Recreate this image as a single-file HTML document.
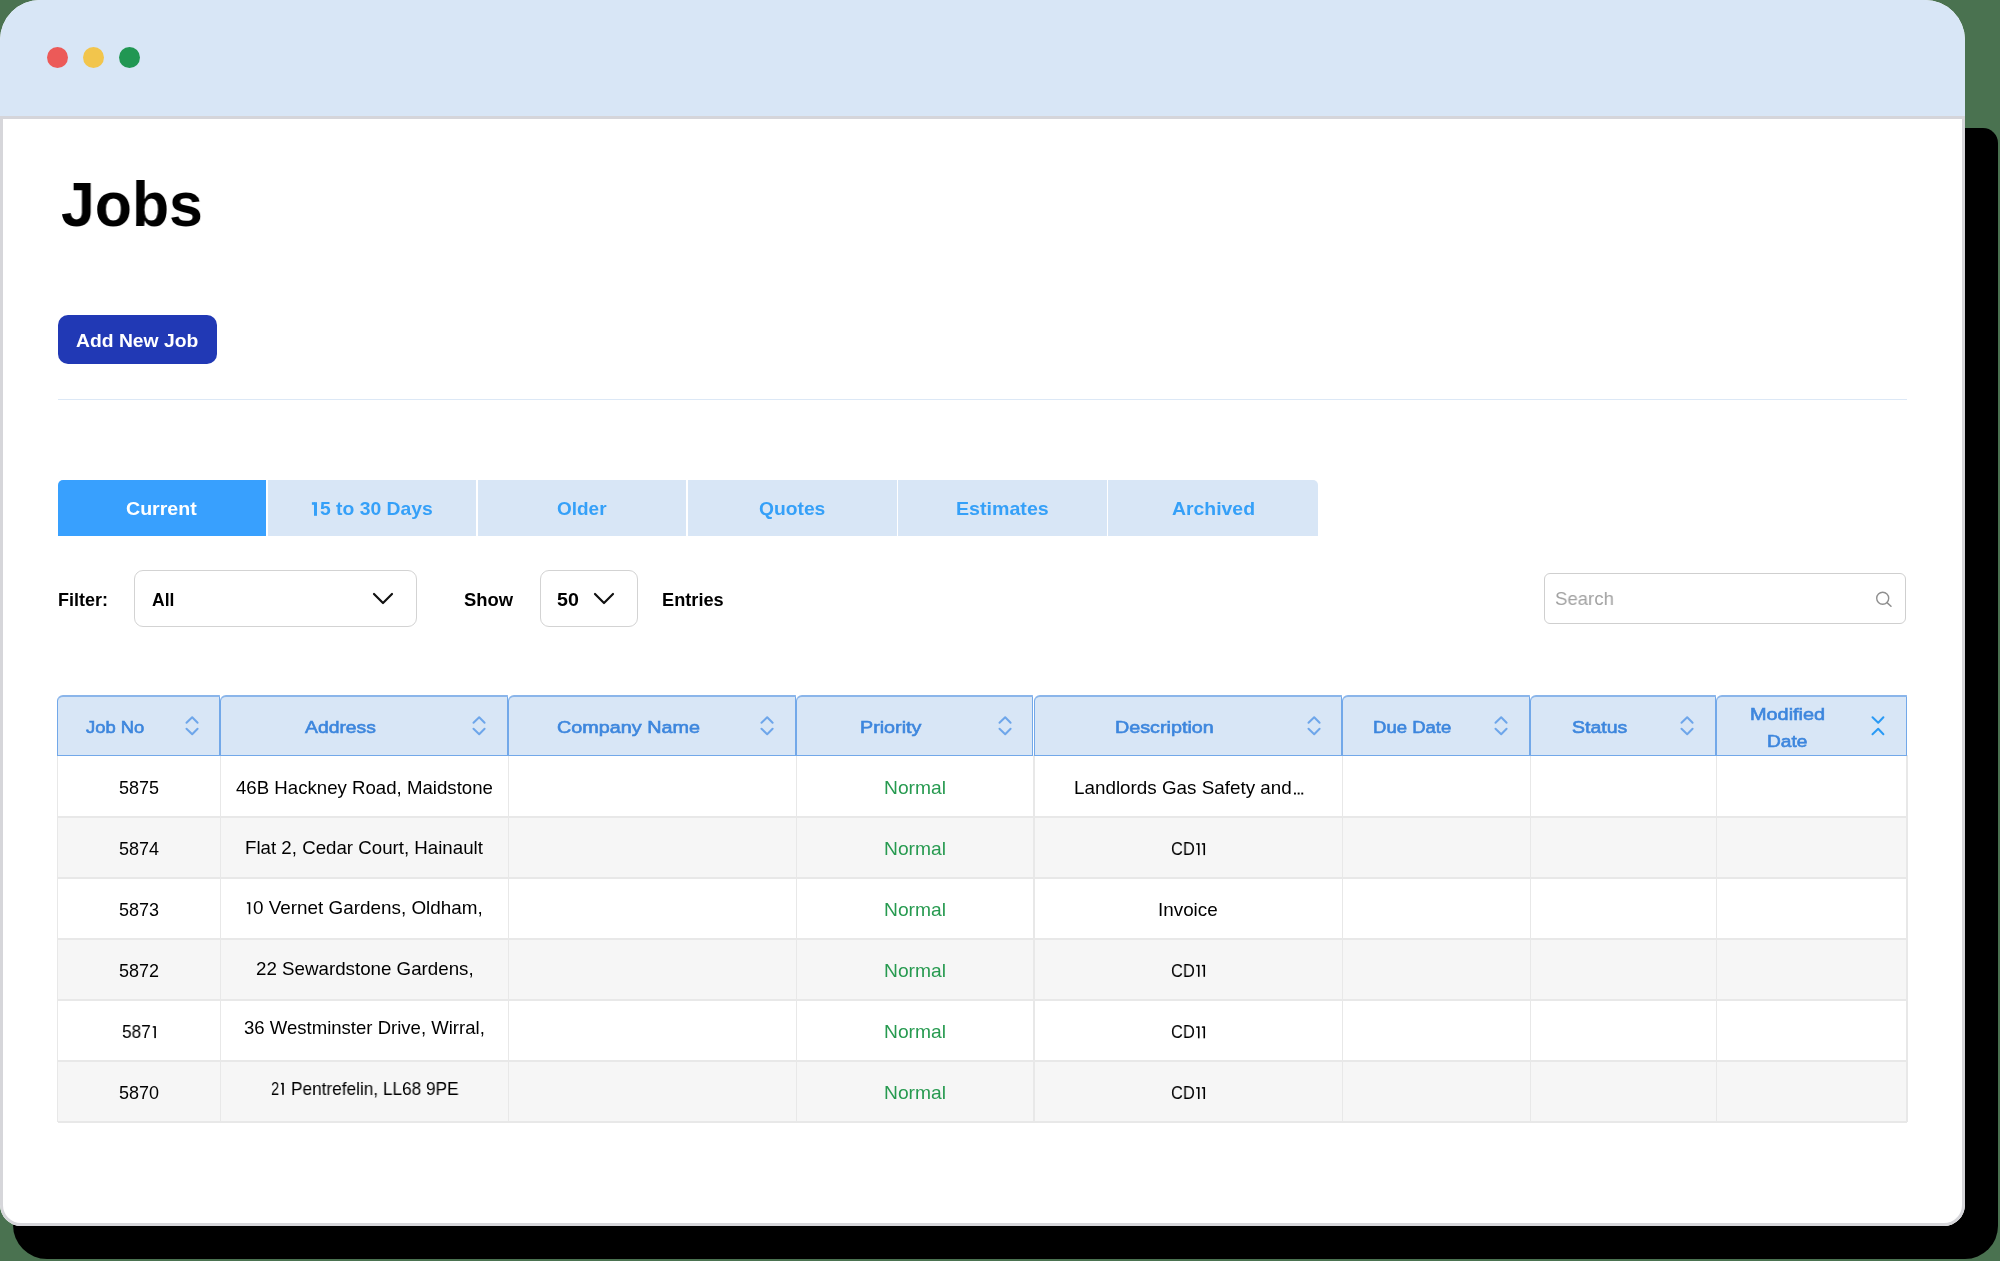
<!DOCTYPE html><html><head><meta charset="utf-8"><style>
*{margin:0;padding:0;box-sizing:border-box}
html,body{width:2000px;height:1261px;overflow:hidden}
body{background:#4a7250;position:relative;font-family:"Liberation Sans",sans-serif}
.t{position:absolute;white-space:nowrap;transform-origin:0 0;will-change:transform}
#shadow{position:absolute;left:13px;top:128px;width:1985px;height:1131px;background:#000;border-radius:0 15px 33px 34px}
#win{position:absolute;left:0;top:0;width:1965px;height:1225.8px;border-radius:40px 40px 21px 21px;overflow:hidden;background:#fff}
#tb{position:absolute;left:0;top:0;width:1965px;height:116px;background:#d8e6f6}
#tbline{position:absolute;left:0;top:116px;width:1965px;height:3px;background:#d5d5da}
#body{position:absolute;left:0;top:118px;width:1965px;height:1107.8px;border:3px solid #d6d6da;border-top:none;border-radius:0 0 21px 21px}
.dot{position:absolute;top:47.2px;width:21px;height:21px;border-radius:50%}
#btn{position:absolute;left:57.6px;top:314.9px;width:159px;height:49.5px;background:#2139b5;border-radius:10px}
#sep{position:absolute;left:57.5px;top:398.5px;width:1849px;height:1.5px;background:#dce8f6}
.tab{position:absolute;top:480.4px;height:55.2px;background:#d8e6f6}
.tab.cur{background:#38a0fe}
.sel{position:absolute;top:570.2px;height:56.8px;border:1.6px solid #d3d3d3;border-radius:9px;background:#fff}
.chev{position:absolute}
#search{position:absolute;left:1543.6px;top:573px;width:362.8px;height:51.4px;border:1.6px solid #cfcfcf;border-radius:6px;background:#fff}
.row{position:absolute;left:57.5px;width:1849.5px}
.hl{position:absolute;left:57.5px;width:1849.5px;height:2px;background:#e8e8e8}
.vl{position:absolute;top:755px;height:367px;width:1.5px;background:#e8e8e8}
.th{position:absolute;top:695px;height:60.5px;background:#d8e6f6;border:1.5px solid #72a8e9;border-top:2px solid #8ab5ea;border-radius:6px 0 0 0}
.sort{position:absolute}
</style></head><body>
<div id="shadow"></div>
<div id="win"><div id="tb"></div><div id="tbline"></div><div id="body"></div></div>
<div class="dot" style="left:47.40px;background:#ec5a58"></div>
<div class="dot" style="left:83.10px;background:#f2c54c"></div>
<div class="dot" style="left:118.70px;background:#219753"></div>
<div class="t" style="left:61.00px;top:173.09px;font-size:62.50px;line-height:62.50px;font-weight:700;color:#000;transform:scaleX(0.9726);">Jobs</div>
<div id="btn"></div>
<div class="t" style="left:75.70px;top:331.22px;font-size:19.00px;line-height:19.00px;font-weight:700;color:#fff;transform:scaleX(1.0158);">Add New Job</div>
<div id="sep"></div>
<div class="tab cur" style="left:57.50px;width:208.78px;border-top-left-radius:5px;"></div>
<div class="tab" style="left:267.58px;width:208.78px;"></div>
<div class="tab" style="left:477.67px;width:208.78px;"></div>
<div class="tab" style="left:687.75px;width:208.78px;"></div>
<div class="tab" style="left:897.83px;width:208.78px;"></div>
<div class="tab" style="left:1107.92px;width:210.08px;border-top-right-radius:5px;"></div>
<div class="t" style="left:125.89px;top:500.34px;font-size:18.50px;line-height:18.50px;font-weight:700;color:#fff;transform:scaleX(1.0588);">Current</div>
<div class="t" style="left:319.85px;top:500.34px;font-size:18.50px;line-height:18.50px;font-weight:700;color:#35a0f8;transform:scaleX(1.0449);">5 to 30 Days</div>
<svg style="position:absolute;left:0;top:0" width="400" height="530"><rect x="314" y="502.2" width="3" height="13.6" fill="#35a0f8"/><rect x="311.9" y="502.2" width="3" height="2.6" fill="#35a0f8"/></svg>
<div class="t" style="left:556.96px;top:500.34px;font-size:18.50px;line-height:18.50px;font-weight:700;color:#35a0f8;transform:scaleX(1.0245);">Older</div>
<div class="t" style="left:758.84px;top:500.34px;font-size:18.50px;line-height:18.50px;font-weight:700;color:#35a0f8;transform:scaleX(1.0406);">Quotes</div>
<div class="t" style="left:956.08px;top:500.34px;font-size:18.50px;line-height:18.50px;font-weight:700;color:#35a0f8;transform:scaleX(1.0609);">Estimates</div>
<div class="t" style="left:1171.56px;top:500.34px;font-size:18.50px;line-height:18.50px;font-weight:700;color:#35a0f8;transform:scaleX(1.0481);">Archived</div>
<div class="t" style="left:58.20px;top:592.19px;font-size:17.50px;line-height:17.50px;font-weight:700;color:#000;transform:scaleX(1.0286);">Filter:</div>
<div class="sel" style="left:134px;width:283px"></div>
<div class="t" style="left:152.00px;top:592.19px;font-size:17.50px;line-height:17.50px;font-weight:700;color:#000;">All</div>
<svg class="chev" style="left:370px;top:589px" width="26" height="20" viewBox="0 0 26 20"><path d="M4 5 L13 14 L22 5" fill="none" stroke="#111" stroke-width="2.2" stroke-linecap="round" stroke-linejoin="round"/></svg>
<div class="t" style="left:463.50px;top:592.19px;font-size:17.50px;line-height:17.50px;font-weight:700;color:#000;transform:scaleX(1.0521);">Show</div>
<div class="sel" style="left:539.6px;width:98.4px"></div>
<div class="t" style="left:557.30px;top:592.19px;font-size:17.50px;line-height:17.50px;font-weight:700;color:#000;transform:scaleX(1.1200);">50</div>
<svg class="chev" style="left:590.8px;top:589px" width="26" height="20" viewBox="0 0 26 20"><path d="M4 5 L13 14 L22 5" fill="none" stroke="#111" stroke-width="2.2" stroke-linecap="round" stroke-linejoin="round"/></svg>
<div class="t" style="left:661.60px;top:592.19px;font-size:17.50px;line-height:17.50px;font-weight:700;color:#000;transform:scaleX(1.0400);">Entries</div>
<div id="search"></div>
<div class="t" style="left:1555.40px;top:589.12px;font-size:19.00px;line-height:19.00px;color:#a2a2a2;transform:scaleX(0.9767);">Search</div>
<svg style="position:absolute;left:1872px;top:588px" width="24" height="24" viewBox="0 0 24 24"><circle cx="10.7" cy="10.2" r="6" fill="none" stroke="#8f8f8f" stroke-width="1.4"/><path d="M15 14.6 L19 18.2" stroke="#8f8f8f" stroke-width="1.5" stroke-linecap="round"/></svg>
<div class="row" style="top:755.5px;height:61.0px;background:#fff"></div>
<div class="row" style="top:816.5px;height:61.0px;background:#f6f6f6"></div>
<div class="row" style="top:877.5px;height:61.0px;background:#fff"></div>
<div class="row" style="top:938.5px;height:61.0px;background:#f6f6f6"></div>
<div class="row" style="top:999.5px;height:61.0px;background:#fff"></div>
<div class="row" style="top:1060.5px;height:61.5px;background:#f6f6f6"></div>
<div class="hl" style="top:815.5px"></div>
<div class="hl" style="top:876.5px"></div>
<div class="hl" style="top:937.5px"></div>
<div class="hl" style="top:998.5px"></div>
<div class="hl" style="top:1059.5px"></div>
<div class="hl" style="top:1121.0px"></div>
<div class="vl" style="left:56.75px"></div>
<div class="vl" style="left:219.75px"></div>
<div class="vl" style="left:507.55px"></div>
<div class="vl" style="left:795.65px"></div>
<div class="vl" style="left:1033.25px"></div>
<div class="vl" style="left:1341.75px"></div>
<div class="vl" style="left:1529.65px"></div>
<div class="vl" style="left:1715.55px"></div>
<div class="vl" style="left:1906.25px"></div>
<div class="th" style="left:57.00px;width:163.00px"></div>
<div class="th" style="left:220.00px;width:287.80px"></div>
<div class="th" style="left:507.80px;width:288.10px"></div>
<div class="th" style="left:795.90px;width:237.60px"></div>
<div class="th" style="left:1033.50px;width:308.50px"></div>
<div class="th" style="left:1342.00px;width:187.90px"></div>
<div class="th" style="left:1529.90px;width:185.90px"></div>
<div class="th" style="left:1715.80px;width:191.70px"></div>
<div class="t" style="left:85.75px;top:719.10px;font-size:17.01px;line-height:17.01px;-webkit-text-stroke:0.6px #3d86dd;color:#3d86dd;transform:scaleX(1.0833);">Job No</div>
<svg class="sort" style="left:179.50px;top:711px" width="24" height="30" viewBox="0 0 24 30"><path d="M6.5 11.8 L12.2 6.2 L17.6 11.8 M6.5 17.8 L12.2 23.2 L17.6 17.8" fill="none" stroke="#6ea6ea" stroke-width="2" stroke-linecap="round" stroke-linejoin="round"/></svg>
<div class="t" style="left:305.15px;top:719.10px;font-size:17.01px;line-height:17.01px;-webkit-text-stroke:0.6px #3d86dd;color:#3d86dd;transform:scaleX(1.1371);">Address</div>
<svg class="sort" style="left:467.30px;top:711px" width="24" height="30" viewBox="0 0 24 30"><path d="M6.5 11.8 L12.2 6.2 L17.6 11.8 M6.5 17.8 L12.2 23.2 L17.6 17.8" fill="none" stroke="#6ea6ea" stroke-width="2" stroke-linecap="round" stroke-linejoin="round"/></svg>
<div class="t" style="left:556.80px;top:719.10px;font-size:17.01px;line-height:17.01px;-webkit-text-stroke:0.6px #3d86dd;color:#3d86dd;transform:scaleX(1.1634);">Company Name</div>
<svg class="sort" style="left:755.40px;top:711px" width="24" height="30" viewBox="0 0 24 30"><path d="M6.5 11.8 L12.2 6.2 L17.6 11.8 M6.5 17.8 L12.2 23.2 L17.6 17.8" fill="none" stroke="#6ea6ea" stroke-width="2" stroke-linecap="round" stroke-linejoin="round"/></svg>
<div class="t" style="left:860.45px;top:719.10px;font-size:17.01px;line-height:17.01px;-webkit-text-stroke:0.6px #3d86dd;color:#3d86dd;transform:scaleX(1.1604);">Priority</div>
<svg class="sort" style="left:993.00px;top:711px" width="24" height="30" viewBox="0 0 24 30"><path d="M6.5 11.8 L12.2 6.2 L17.6 11.8 M6.5 17.8 L12.2 23.2 L17.6 17.8" fill="none" stroke="#6ea6ea" stroke-width="2" stroke-linecap="round" stroke-linejoin="round"/></svg>
<div class="t" style="left:1114.88px;top:719.10px;font-size:17.01px;line-height:17.01px;-webkit-text-stroke:0.6px #3d86dd;color:#3d86dd;transform:scaleX(1.1618);">Description</div>
<svg class="sort" style="left:1301.50px;top:711px" width="24" height="30" viewBox="0 0 24 30"><path d="M6.5 11.8 L12.2 6.2 L17.6 11.8 M6.5 17.8 L12.2 23.2 L17.6 17.8" fill="none" stroke="#6ea6ea" stroke-width="2" stroke-linecap="round" stroke-linejoin="round"/></svg>
<div class="t" style="left:1373.20px;top:719.10px;font-size:17.01px;line-height:17.01px;-webkit-text-stroke:0.6px #3d86dd;color:#3d86dd;transform:scaleX(1.0903);">Due Date</div>
<svg class="sort" style="left:1489.40px;top:711px" width="24" height="30" viewBox="0 0 24 30"><path d="M6.5 11.8 L12.2 6.2 L17.6 11.8 M6.5 17.8 L12.2 23.2 L17.6 17.8" fill="none" stroke="#6ea6ea" stroke-width="2" stroke-linecap="round" stroke-linejoin="round"/></svg>
<div class="t" style="left:1571.85px;top:719.10px;font-size:17.01px;line-height:17.01px;-webkit-text-stroke:0.6px #3d86dd;color:#3d86dd;transform:scaleX(1.1458);">Status</div>
<svg class="sort" style="left:1675.30px;top:711px" width="24" height="30" viewBox="0 0 24 30"><path d="M6.5 11.8 L12.2 6.2 L17.6 11.8 M6.5 17.8 L12.2 23.2 L17.6 17.8" fill="none" stroke="#6ea6ea" stroke-width="2" stroke-linecap="round" stroke-linejoin="round"/></svg>
<div class="t" style="left:1749.70px;top:705.90px;font-size:17.01px;line-height:17.01px;-webkit-text-stroke:0.6px #3d86dd;color:#3d86dd;transform:scaleX(1.1687);">Modified</div>
<div class="t" style="left:1766.90px;top:732.70px;font-size:17.01px;line-height:17.01px;-webkit-text-stroke:0.6px #3d86dd;color:#3d86dd;transform:scaleX(1.1250);">Date</div>
<svg class="sort" style="left:1866px;top:711px" width="24" height="30" viewBox="0 0 24 30"><path d="M6.5 6.2 L12.2 11.8 L17.4 6.2 M6.5 23.2 L12.2 17.8 L17.4 23.2" fill="none" stroke="#2a9af5" stroke-width="2" stroke-linecap="round" stroke-linejoin="round"/></svg>
<div class="t" style="left:119.00px;top:779.27px;font-size:17.99px;line-height:17.99px;color:#000;">5875</div>
<div class="t" style="left:235.90px;top:779.27px;font-size:17.99px;line-height:17.99px;color:#000;transform:scaleX(1.0363);">46B Hackney Road, Maidstone</div>
<div class="t" style="left:884.20px;top:779.27px;font-size:17.99px;line-height:17.99px;color:#279a50;transform:scaleX(1.0690);">Normal</div>
<div class="t" style="left:1073.75px;top:779.27px;font-size:17.99px;line-height:17.99px;color:#000;transform:scaleX(1.0469);">Landlords Gas Safety and</div>
<div class="t" style="left:119.00px;top:840.27px;font-size:17.99px;line-height:17.99px;color:#000;">5874</div>
<div class="t" style="left:245.40px;top:839.47px;font-size:17.99px;line-height:17.99px;color:#000;transform:scaleX(1.0393);">Flat 2, Cedar Court, Hainault</div>
<div class="t" style="left:884.20px;top:840.27px;font-size:17.99px;line-height:17.99px;color:#279a50;transform:scaleX(1.0690);">Normal</div>
<div class="t" style="left:1171.05px;top:840.27px;font-size:17.99px;line-height:17.99px;color:#000;transform:scaleX(0.9154);">CD</div>
<div class="t" style="left:119.00px;top:900.77px;font-size:17.99px;line-height:17.99px;color:#000;">5873</div>
<div class="t" style="left:253.00px;top:899.37px;font-size:17.99px;line-height:17.99px;color:#000;transform:scaleX(1.0493);">0 Vernet Gardens, Oldham,</div>
<div class="t" style="left:884.20px;top:900.77px;font-size:17.99px;line-height:17.99px;color:#279a50;transform:scaleX(1.0690);">Normal</div>
<div class="t" style="left:1158.40px;top:900.77px;font-size:17.99px;line-height:17.99px;color:#000;transform:scaleX(1.0474);">Invoice</div>
<div class="t" style="left:119.00px;top:961.97px;font-size:17.99px;line-height:17.99px;color:#000;">5872</div>
<div class="t" style="left:255.55px;top:959.97px;font-size:17.99px;line-height:17.99px;color:#000;transform:scaleX(1.0416);">22 Sewardstone Gardens,</div>
<div class="t" style="left:884.20px;top:961.97px;font-size:17.99px;line-height:17.99px;color:#279a50;transform:scaleX(1.0690);">Normal</div>
<div class="t" style="left:1171.05px;top:961.97px;font-size:17.99px;line-height:17.99px;color:#000;transform:scaleX(0.9154);">CD</div>
<div class="t" style="left:122.25px;top:1023.47px;font-size:17.99px;line-height:17.99px;color:#000;transform:scaleX(0.9583);">587</div>
<div class="t" style="left:243.75px;top:1019.47px;font-size:17.99px;line-height:17.99px;color:#000;transform:scaleX(1.0312);">36 Westminster Drive, Wirral,</div>
<div class="t" style="left:884.20px;top:1023.47px;font-size:17.99px;line-height:17.99px;color:#279a50;transform:scaleX(1.0690);">Normal</div>
<div class="t" style="left:1171.05px;top:1023.47px;font-size:17.99px;line-height:17.99px;color:#000;transform:scaleX(0.9154);">CD</div>
<div class="t" style="left:119.00px;top:1084.17px;font-size:17.99px;line-height:17.99px;color:#000;">5870</div>
<div class="t" style="left:270.85px;top:1080.17px;font-size:17.99px;line-height:17.99px;color:#000;transform:scaleX(0.8150);">2</div>
<div class="t" style="left:291.25px;top:1080.17px;font-size:17.99px;line-height:17.99px;color:#000;transform:scaleX(0.9574);">Pentrefelin, LL68 9PE</div>
<div class="t" style="left:884.20px;top:1084.17px;font-size:17.99px;line-height:17.99px;color:#279a50;transform:scaleX(1.0690);">Normal</div>
<div class="t" style="left:1171.05px;top:1084.17px;font-size:17.99px;line-height:17.99px;color:#000;transform:scaleX(0.9154);">CD</div>
<svg style="position:absolute;left:0;top:0" width="2000" height="1261"><rect x="1294.00" y="792.60" width="1.9" height="1.9" fill="#000"/><rect x="1297.70" y="792.60" width="1.9" height="1.9" fill="#000"/><rect x="1301.30" y="792.60" width="1.9" height="1.9" fill="#000"/><rect x="1197.95" y="843.20" width="1.60" height="11.90" fill="#000"/><rect x="1196.15" y="843.20" width="2.60" height="1.45" fill="#000"/><rect x="1203.45" y="843.20" width="1.60" height="11.90" fill="#000"/><rect x="1201.85" y="843.20" width="2.40" height="1.45" fill="#000"/><rect x="248.70" y="902.30" width="1.60" height="11.90" fill="#000"/><rect x="246.90" y="902.30" width="2.60" height="1.45" fill="#000"/><rect x="1197.95" y="964.90" width="1.60" height="11.90" fill="#000"/><rect x="1196.15" y="964.90" width="2.60" height="1.45" fill="#000"/><rect x="1203.45" y="964.90" width="1.60" height="11.90" fill="#000"/><rect x="1201.85" y="964.90" width="2.40" height="1.45" fill="#000"/><rect x="154.30" y="1026.20" width="1.60" height="11.90" fill="#000"/><rect x="152.75" y="1026.20" width="2.35" height="1.45" fill="#000"/><rect x="1197.95" y="1026.40" width="1.60" height="11.90" fill="#000"/><rect x="1196.15" y="1026.40" width="2.60" height="1.45" fill="#000"/><rect x="1203.45" y="1026.40" width="1.60" height="11.90" fill="#000"/><rect x="1201.85" y="1026.40" width="2.40" height="1.45" fill="#000"/><rect x="282.20" y="1082.90" width="1.60" height="11.90" fill="#000"/><rect x="280.90" y="1082.90" width="2.10" height="1.45" fill="#000"/><rect x="1197.95" y="1087.10" width="1.60" height="11.90" fill="#000"/><rect x="1196.15" y="1087.10" width="2.60" height="1.45" fill="#000"/><rect x="1203.45" y="1087.10" width="1.60" height="11.90" fill="#000"/><rect x="1201.85" y="1087.10" width="2.40" height="1.45" fill="#000"/></svg>
</body></html>
